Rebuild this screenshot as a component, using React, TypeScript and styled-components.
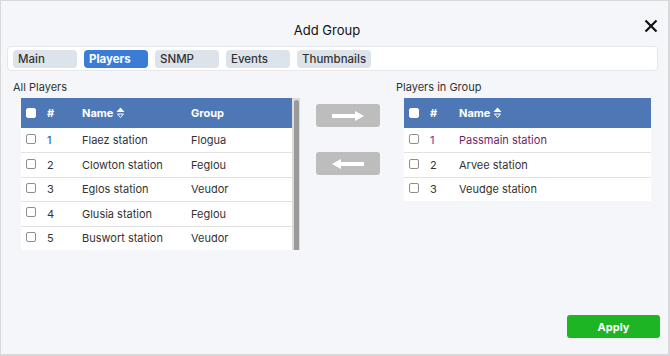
import React from 'react'
import styled, { createGlobalStyle } from 'styled-components'

const GlobalStyle = createGlobalStyle`
  html, body {
    margin: 0;
    padding: 0;
    font-family: Inter, "Liberation Sans", sans-serif;
    color: #333;
  }
`

type Player = { id: number; name: string; group?: string; tone?: string }

const allPlayers: Player[] = [
  { id: 1, name: 'Flaez station', group: 'Flogua', tone: '#1d5b86' },
  { id: 2, name: 'Clowton station', group: 'Feglou' },
  { id: 3, name: 'Eglos station', group: 'Veudor' },
  { id: 4, name: 'Glusia station', group: 'Feglou' },
  { id: 5, name: 'Buswort station', group: 'Veudor' },
]

const groupPlayers: Player[] = [
  { id: 1, name: 'Passmain station', tone: '#6e1f6e' },
  { id: 2, name: 'Arvee station' },
  { id: 3, name: 'Veudge station' },
]

const tabs = ['Main', 'Players', 'SNMP', 'Events', 'Thumbnails']

const SortIcon = () => (
  <svg width="9" height="12" viewBox="0 0 9 12">
    <path d="M4.5 0.5 L8.5 5 H0.5 Z" fill="#fff" />
    <path d="M1.5 7 H7.5 L4.5 10.6 Z" fill="none" stroke="#fff" strokeWidth="1" />
  </svg>
)

const Arrow = ({ left }: { left?: boolean }) => (
  <svg width="32" height="10" viewBox="0 0 32 10" style={left ? { transform: 'scaleX(-1)' } : undefined}>
    <path d="M0 3 H23 V0 L32 5 L23 10 V7 H0 Z" fill="#fff" />
  </svg>
)

export default function App() {
  return (
    <>
      <GlobalStyle />
      <Dialog>
        <Header>
          <Title>Add Group</Title>
          <CloseButton aria-label="close">
            <svg width="14" height="14" viewBox="0 0 14 14">
              <path d="M1.5 1.5 L12.5 12.5 M12.5 1.5 L1.5 12.5" stroke="#111" strokeWidth="2.2" />
            </svg>
          </CloseButton>
        </Header>
        <TabBar>
          {tabs.map(t => (
            <Tab key={t} active={t === 'Players'}>{t}</Tab>
          ))}
        </TabBar>
        <Body>
          <Panel>
            <Label>All Players</Label>
            <TableWrap>
              <Table cols="21px 35px 109px 1fr">
                <HeadRow>
                  <Cell><Box header /></Cell>
                  <Cell>#</Cell>
                  <Cell>Name&nbsp;<SortIcon /></Cell>
                  <Cell>Group</Cell>
                </HeadRow>
                {allPlayers.map(p => (
                  <Row key={p.id}>
                    <Cell><Box /></Cell>
                    <Cell style={p.tone ? { color: p.tone } : undefined}>{p.id}</Cell>
                    <Cell>{p.name}</Cell>
                    <Cell>{p.group}</Cell>
                  </Row>
                ))}
              </Table>
              <ScrollTrack><ScrollThumb /></ScrollTrack>
            </TableWrap>
          </Panel>
          <Mover>
            <MoveButton><Arrow /></MoveButton>
            <MoveButton><Arrow left /></MoveButton>
          </Mover>
          <Panel>
            <Label>Players in Group</Label>
            <TableWrap>
              <Table cols="21px 29px 1fr" width={248}>
                <HeadRow>
                  <Cell><Box header /></Cell>
                  <Cell>#</Cell>
                  <Cell>Name&nbsp;<SortIcon /></Cell>
                </HeadRow>
                {groupPlayers.map(p => (
                  <Row key={p.id}>
                    <Cell><Box /></Cell>
                    <Cell style={p.tone ? { color: '#8a2a8a' } : undefined}>{p.id}</Cell>
                    <Cell style={p.tone ? { color: p.tone } : undefined}>{p.name}</Cell>
                  </Row>
                ))}
              </Table>
            </TableWrap>
          </Panel>
        </Body>
        <Footer>
          <ApplyButton>Apply</ApplyButton>
        </Footer>
      </Dialog>
    </>
  )
}

const Dialog = styled.div`
  width: 670px;
  height: 356px;
  box-sizing: border-box;
  background: #f5f6fa;
  border: 1px solid #d9d9dc;
  border-right-width: 2px;
  border-bottom-width: 2px;
  display: flex;
  flex-direction: column;
`

const Header = styled.div`
  position: relative;
  height: 45px;
  display: flex;
  justify-content: center;
  align-items: flex-start;
  padding: 21px 15px 0 0;
  box-sizing: border-box;
`

const Title = styled.div`
  font-size: 13px;
  line-height: 16px;
  color: #111;
`

const CloseButton = styled.div`
  position: absolute;
  right: 10px;
  top: 18px;
  width: 14px;
  height: 14px;
  display: flex;
`

const TabBar = styled.div`
  margin: 0 10px 0 6px;
  height: 25px;
  box-sizing: border-box;
  background: #fff;
  border: 1px solid #e6e8ec;
  border-radius: 4px;
  display: flex;
  align-items: center;
  gap: 7px;
  padding: 0 5px;
`

const Tab = styled.div<{ active?: boolean }>`
  min-width: 64px;
  height: 18px;
  box-sizing: border-box;
  padding: 0 5px;
  border-radius: 4px;
  background: ${p => (p.active ? '#3b7dd6' : '#dde3ea')};
  color: ${p => (p.active ? '#fff' : '#333')};
  font-size: 11.5px;
  font-weight: ${p => (p.active ? 700 : 500)};
  line-height: 18px;
`

const Body = styled.div`
  flex: 1;
  display: grid;
  grid-template-columns: 287px 64px 255px;
  column-gap: 16px;
  padding: 9px 0 0 12px;
  align-items: start;
`

const Panel = styled.div`
  display: flex;
  flex-direction: column;
`

const Label = styled.div`
  font-size: 11px;
  line-height: 14px;
  margin-bottom: 4px;
  color: #333;
`

const TableWrap = styled.div`
  display: flex;
  margin-left: 8px;
  align-items: stretch;
`

const Table = styled.div<{ cols: string; width?: number }>`
  width: ${p => p.width ?? 271}px;
  display: grid;
  grid-template-columns: ${p => p.cols};
  background: #fff;
  font-size: 11px;
`

const HeadRow = styled.div`
  display: contents;
  & > div {
    height: 30px;
    background: #4e78b5;
    color: #fff;
    font-weight: 700;
  }
`

const Row = styled.div`
  display: contents;
  & > div {
    height: 24.4px;
    color: #333;
    border-top: 1px solid #e2e2e2;
  }
  &:nth-child(2) > div {
    border-top: none;
  }
`

const Cell = styled.div`
  display: flex;
  align-items: center;
  box-sizing: border-box;
  padding-left: 5px;
  white-space: nowrap;
`

const Box = styled.span<{ header?: boolean }>`
  width: 10px;
  height: 10px;
  box-sizing: border-box;
  border: 1px solid ${p => (p.header ? '#fff' : '#8f8f8f')};
  border-radius: 2px;
  background: #fff;
  margin-top: ${p => (p.header ? 0 : -3)}px;
`

const ScrollTrack = styled.div`
  width: 8px;
  background: #dcdcdc;
  display: flex;
  justify-content: center;
  padding: 2px 0 0 1px;
  box-sizing: border-box;
`

const ScrollThumb = styled.div`
  width: 5px;
  height: 100%;
  background: #9a9a9a;
  border-radius: 3px 3px 0 0;
`

const Mover = styled.div`
  display: flex;
  flex-direction: column;
  gap: 25px;
  padding-top: 24px;
`

const MoveButton = styled.div`
  height: 23px;
  background: #bdbdbd;
  border-radius: 3px;
  display: flex;
  align-items: center;
  justify-content: center;
`

const Footer = styled.div`
  display: flex;
  justify-content: flex-end;
  padding: 0 8px 16px 0;
`

const ApplyButton = styled.div`
  width: 93px;
  height: 23px;
  background: #1db524;
  border-radius: 3px;
  color: #fff;
  font-size: 11px;
  font-weight: 700;
  display: flex;
  align-items: center;
  justify-content: center;
`
